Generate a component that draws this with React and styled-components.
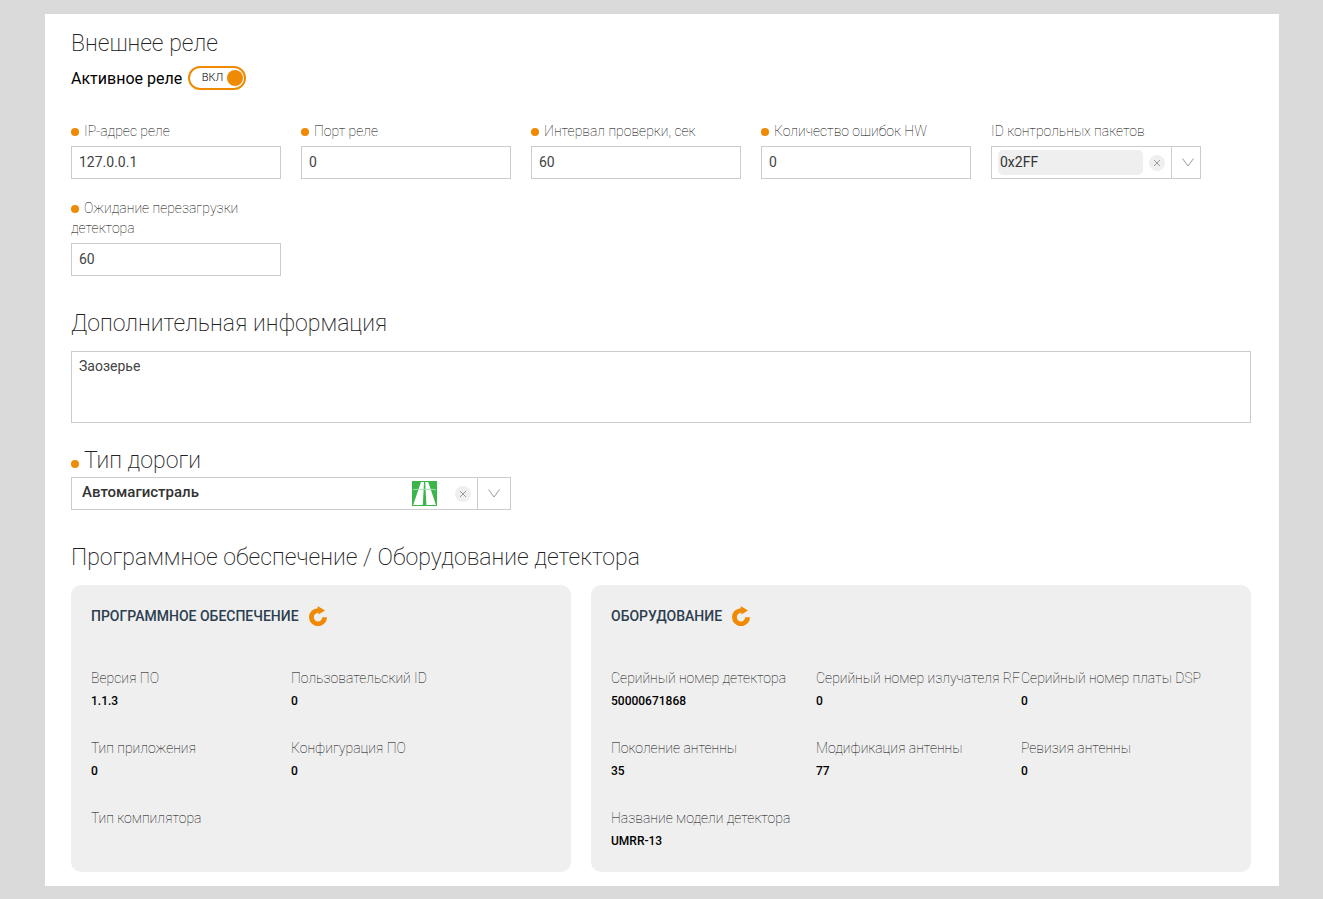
import React, { useState } from "react"
import styled, { createGlobalStyle } from "styled-components"

const relayFields = [
  { id: "ip", label: "IP-адрес реле", value: "127.0.0.1" },
  { id: "port", label: "Порт реле", value: "0" },
  { id: "interval", label: "Интервал проверки, сек", value: "60" },
  { id: "errors", label: "Количество ошибок HW", value: "0" },
]

const software = [
  { name: "Версия ПО", value: "1.1.3" },
  { name: "Пользовательский ID", value: "0" },
  { name: "Тип приложения", value: "0" },
  { name: "Конфигурация ПО", value: "0" },
  { name: "Тип компилятора", value: "" },
]

const hardware = [
  { name: "Серийный номер детектора", value: "50000671868" },
  { name: "Серийный номер излучателя RF", value: "0" },
  { name: "Серийный номер платы DSP", value: "0" },
  { name: "Поколение антенны", value: "35" },
  { name: "Модификация антенны", value: "77" },
  { name: "Ревизия антенны", value: "0" },
  { name: "Название модели детектора", value: "UMRR-13" },
]

const Refresh = () => (
  <svg width="18" height="20" viewBox="0 0 18 20" aria-hidden="true">
    <path
      d="M15.6 11.2A6.6 6.6 0 1 1 9 4.6"
      fill="none"
      stroke="#ef8a05"
      strokeWidth="4.8"
    />
    <path d="M8.6 0L16 4.4L9.4 8.6Z" fill="#ef8a05" />
  </svg>
)

const Cross = () => (
  <svg width="8" height="8" viewBox="0 0 8 8" aria-hidden="true">
    <path d="M1 1L7 7M7 1L1 7" stroke="#999" fill="none" />
  </svg>
)

const Chevron = () => (
  <svg width="12" height="9" viewBox="0 0 12 9" aria-hidden="true">
    <path d="M0.5 0.5L6 8L11.5 0.5" stroke="#999" fill="none" />
  </svg>
)

const Motorway = () => (
  <svg width="25" height="25" viewBox="0 0 25 25" aria-hidden="true">
    <rect width="25" height="25" fill="#39b54a" />
    <path
      d="M9 1H12L10.8 24H1.2ZM13.2 1H16.2L24 24H14.4Z"
      fill="#fff"
    />
    <path d="M1 9L3 8.4H22L24 9" stroke="#a8dfb0" fill="none" />
  </svg>
)

const Field = ({ id, label, value }) => (
  <FieldStyle>
    <Label htmlFor={id}>
      <Dot />
      {label}
    </Label>
    <Input id={id} defaultValue={value} />
  </FieldStyle>
)

const Panel = ({ title, items, wide }) => (
  <PanelStyle>
    <PanelHead>
      <PanelTitle>{title}</PanelTitle>
      <IconButton type="button" aria-label="Обновить">
        <Refresh />
      </IconButton>
    </PanelHead>
    <List $wide={wide}>
      {items.map(item => (
        <div key={item.name}>
          <Name>{item.name}</Name>
          <Value>{item.value}</Value>
        </div>
      ))}
    </List>
  </PanelStyle>
)

const App = () => {
  const [active, setActive] = useState(true)
  return (
    <>
      <GlobalStyle />
      <Page>
        <section>
          <Title>Внешнее реле</Title>
          <ToggleRow>
            Активное реле
            <Track $on={active}>
              <input
                type="checkbox"
                checked={active}
                onChange={e => setActive(e.target.checked)}
              />
              <span>{active ? "ВКЛ" : "ВЫКЛ"}</span>
              <Knob />
            </Track>
          </ToggleRow>
          <Grid>
            {relayFields.map(field => (
              <Field key={field.id} {...field} />
            ))}
            <FieldStyle>
              <Label htmlFor="packets">ID контрольных пакетов</Label>
              <SelectBox>
                <ChipSelect id="packets" defaultValue="0x2FF">
                  <option>0x2FF</option>
                </ChipSelect>
                <Clear type="button" aria-label="Очистить">
                  <Cross />
                </Clear>
                <Arrow>
                  <Chevron />
                </Arrow>
              </SelectBox>
            </FieldStyle>
            <Field id="reboot" label="Ожидание перезагрузки детектора" value="60" />
          </Grid>
        </section>

        <Section>
          <Title as="label" htmlFor="info">
            Дополнительная информация
          </Title>
          <TextArea id="info" defaultValue="Заозерье" />
        </Section>

        <Section $tight>
          <Title as="label" htmlFor="road">
            <Dot />
            Тип дороги
          </Title>
          <SelectBox $road>
            <RoadSelect id="road" defaultValue="Автомагистраль">
              <option>Автомагистраль</option>
            </RoadSelect>
            <Motorway />
            <Clear type="button" aria-label="Очистить" $road>
              <Cross />
            </Clear>
            <Arrow $road>
              <Chevron />
            </Arrow>
          </SelectBox>
        </Section>

        <Section>
          <Title>Программное обеспечение / Оборудование детектора</Title>
          <Panels>
            <Panel title="Программное обеспечение" items={software} />
            <Panel title="Оборудование" items={hardware} wide />
          </Panels>
        </Section>
      </Page>
    </>
  )
}

export default App

const GlobalStyle = createGlobalStyle`
  * {
    box-sizing: border-box;
  }
  body {
    margin: 0;
    padding: 14px 44px 12px 45px;
    background: #dadada;
    font-family: Roboto, "Liberation Sans", sans-serif;
    font-size: 14px;
    line-height: 20px;
    color: #444;
  }
  input, select, textarea, button {
    font: inherit;
    color: inherit;
    border-radius: 0;
  }
`

const Page = styled.main`
  background: #fff;
  padding: 15px 28px 14px 26px;
`

const Section = styled.section`
  margin-top: ${props => (props.$tight ? "23px" : "33px")};
`

const Title = styled.h2`
  display: block;
  margin: 0;
  font-size: 23px;
  line-height: 30px;
  font-weight: 200;
  color: #222;
`

const ToggleRow = styled.label`
  display: flex;
  align-items: flex-end;
  gap: 6px;
  margin: 7px 0 31px;
  font-size: 16px;
  line-height: 22px;
  color: #000;
`

const Track = styled.span`
  position: relative;
  display: flex;
  align-items: center;
  justify-content: flex-end;
  flex-direction: ${props => (props.$on ? "row" : "row-reverse")};
  gap: 4px;
  width: 58px;
  height: 24px;
  padding: 0 1px;
  border: 2px solid #ef8a05;
  border-radius: 12px;
  font-size: 11px;
  font-weight: 300;
  input {
    position: absolute;
    inset: 0;
    margin: 0;
    opacity: 0;
  }
`

const Knob = styled.span`
  width: 16px;
  height: 16px;
  border-radius: 50%;
  background: #ef8a05;
`

const Grid = styled.div`
  display: grid;
  grid-template-columns: repeat(auto-fill, 210px);
  gap: 19px 20px;
`

const FieldStyle = styled.div`
  display: flex;
  flex-direction: column;
`

const Label = styled.label`
  margin-bottom: 5px;
  font-weight: 100;
  color: #000;
`

const Dot = styled.span`
  display: inline-block;
  width: 8px;
  height: 8px;
  margin-right: 5px;
  border-radius: 50%;
  background: #ef8a05;
`

const Input = styled.input`
  width: 100%;
  height: 33px;
  padding: 0 7px 2px;
  border: 1px solid #ccc;
`

const TextArea = styled.textarea`
  display: block;
  width: 100%;
  height: 72px;
  margin-top: 12px;
  padding: 4px 7px;
  border: 1px solid #ccc;
  resize: none;
`

const SelectBox = styled.div`
  display: flex;
  align-items: center;
  height: 33px;
  max-width: ${props => (props.$road ? "440px" : "none")};
  margin-top: ${props => (props.$road ? "1px" : "0")};
  border: 1px solid #ccc;
`

const BaseSelect = styled.select`
  appearance: none;
  flex: 1;
  min-width: 0;
  border: 0;
  background: none;
  color: #333;
`

const ChipSelect = styled(BaseSelect)`
  height: 25px;
  margin-left: 6px;
  padding: 0 2px 2px;
  border-radius: 5px;
  background: #efefef;
`

const RoadSelect = styled(BaseSelect)`
  height: 31px;
  padding: 0 10px 4px;
  font-size: 15px;
  font-weight: 500;
`

const Clear = styled.button`
  display: flex;
  align-items: center;
  justify-content: center;
  width: 16px;
  height: 16px;
  margin: ${props => (props.$road ? "0 6px 0 18px" : "0 6px")};
  padding: 0;
  border: 0;
  border-radius: 50%;
  background: #efefef;
`

const Arrow = styled.span`
  display: flex;
  align-items: center;
  justify-content: center;
  align-self: stretch;
  width: ${props => (props.$road ? "33px" : "29px")};
  padding-left: ${props => (props.$road ? "0" : "4px")};
  border-left: 1px solid #ccc;
`

const Panels = styled.div`
  display: grid;
  grid-template-columns: minmax(0, 25fr) minmax(0, 33fr);
  gap: 20px;
  margin-top: 12px;
`

const PanelStyle = styled.section`
  padding: 20px 20px 21px;
  border-radius: 10px;
  background: #efefef;
`

const PanelHead = styled.div`
  display: flex;
  align-items: center;
  gap: 10px;
  height: 22px;
  margin-bottom: 41px;
`

const PanelTitle = styled.h3`
  margin: 0;
  font-size: 14px;
  font-weight: 500;
  text-transform: uppercase;
  color: #2c3e50;
`

const IconButton = styled.button`
  display: flex;
  padding: 0;
  border: 0;
  background: none;
`

const List = styled.dl`
  display: grid;
  grid-template-columns: ${props =>
    props.$wide ? "repeat(3, 205px)" : "repeat(2, 200px)"};
  row-gap: 27px;
  margin: 0;
`

const Name = styled.dt`
  font-weight: 100;
  white-space: nowrap;
  color: #000;
`

const Value = styled.dd`
  min-height: 20px;
  margin: 3px 0 0;
  font-size: 12px;
  font-weight: 500;
  color: #000;
`
